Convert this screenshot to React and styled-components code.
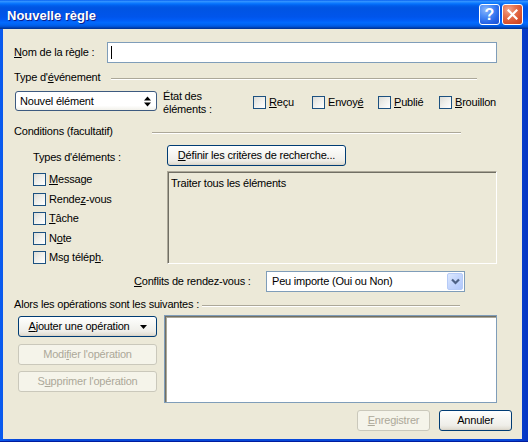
import React from 'react';
import styled, { createGlobalStyle } from 'styled-components';

const GlobalStyle = createGlobalStyle`
  html, body {
    margin: 0;
    padding: 0;
    background: #ffffff;
  }
  body {
    font-family: "Liberation Sans", Arial, sans-serif;
  }
`

const Window = styled.div`
  width: 528px;
  height: 442px;
  display: flex;
  flex-direction: column;
  overflow: hidden;
`

const TitleBar = styled.div`
  height: 29px;
  flex: none;
  display: flex;
  align-items: center;
  gap: 2px;
  padding: 0 5px 0 7px;
  background: linear-gradient(180deg, #0058EE 0%, #3593FF 4%, #288EFF 7%, #127DFF 10%, #036FFC 14%, #0262EE 18%, #0057E5 24%, #0054E3 30%, #0055EB 58%, #005BF5 68%, #026AFE 78%, #0062EF 86%, #0052D6 92%, #0040AB 96%, #003092 100%);
`

const Title = styled.div`
  flex: 1;
  color: #ffffff;
  font-weight: bold;
  font-size: 13px;
  padding-top: 1px;
  text-shadow: 1px 1px 0 #0A1E8C;
`

const CaptionButton = styled.div`
  width: 21px;
  height: 21px;
  box-sizing: border-box;
  border: 1px solid #ffffff;
  border-radius: 3px;
  display: flex;
  align-items: center;
  justify-content: center;
  color: #ffffff;
  font-weight: bold;
  font-size: 16px;
  background: ${p => p.$close
    ? 'radial-gradient(circle at 30% 25%, #F3A58D 0%, #E5734F 35%, #D9512D 70%, #C4401F 100%)'
    : 'radial-gradient(circle at 30% 25%, #8CB6FA 0%, #4C8DF7 35%, #2563E6 70%, #1B4FD0 100%)'};
`

const Frame = styled.div`
  flex: 1;
  display: flex;
  padding: 0 6px 3px 3px;
  background: linear-gradient(90deg, #0A5CF0 0%, #0748D9 3%, #0748D9 97%, #0636C2 100%);
  box-shadow: inset 0 -1px 0 #001C9E;
`

const Client = styled.div`
  flex: 1;
  display: flex;
  flex-direction: column;
  background: #ECE9D8;
  padding: 13px 10px 0 11px;
  font-size: 11px;
  line-height: 13px;
  letter-spacing: -0.2px;
  color: #000000;
  white-space: nowrap;
`

const Key = styled.span`
  text-decoration: underline;
  text-underline-offset: 1px;
`

const NameRow = styled.div`
  display: flex;
  align-items: center;
  height: 21px;
`

const FieldLabel = styled.div`
  width: ${p => p.$w}px;
  flex: none;
  text-align: ${p => p.$align || 'left'};
`

const TextInput = styled.div`
  width: 390px;
  height: 21px;
  box-sizing: border-box;
  border: 1px solid #7F9DB9;
  background: #ffffff;
  display: flex;
  align-items: center;
  padding-left: 3px;
`

const Caret = styled.span`
  width: 1px;
  height: 13px;
  background: #000000;
`

const GroupHeader = styled.div`
  display: flex;
  align-items: center;
  height: 13px;
  width: ${p => p.$w}px;
  margin-top: ${p => p.$mt}px;
`

const Rule = styled.div`
  margin-left: auto;
  flex: 0 1 ${p => p.$w}px;
  height: 0;
  border-top: 1px solid #ACA899;
  border-bottom: 1px solid #ffffff;
  margin-top: 3px;
`

const EventRow = styled.div`
  display: flex;
  align-items: flex-start;
  height: 28px;
  margin-top: 5px;
  padding-left: 1px;
`

const SpinSelect = styled.div`
  width: 142px;
  height: 20px;
  margin-top: 2px;
  box-sizing: border-box;
  border: 1px solid #3D5A80;
  border-radius: 3px;
  background: linear-gradient(180deg, #ffffff 0%, #ffffff 75%, #F2F1EB 100%);
  display: flex;
  align-items: center;
  justify-content: space-between;
  padding: 0 5px 0 4px;
`

const StateLabel = styled.div`
  width: 90px;
  margin-left: 6px;
  margin-top: 1px;
  flex: none;
`

const Check = styled.div`
  display: flex;
  align-items: center;
  gap: 3px;
  flex: none;
  width: ${p => (p.$w ? `${p.$w}px` : 'auto')};
  height: ${p => p.$h || 13}px;
  margin-top: ${p => p.$mt || 0}px;
`

const Box = styled.span`
  width: 13px;
  height: 13px;
  box-sizing: border-box;
  flex: none;
  border: 1px solid #1C5180;
  background: linear-gradient(135deg, #DCDCD7 0%, #EEEEEA 45%, #FFFFFF 100%);
`

const CondArea = styled.div`
  display: grid;
  grid-template-columns: 19px 134px 330px;
  height: 119px;
  margin-top: 7px;
`

const TypesColumn = styled.div`
  grid-column: 2;
  padding-top: 6px;
  display: flex;
  flex-direction: column;
`

const CheckList = styled.div`
  margin-top: 6px;
  display: flex;
  flex-direction: column;
`

const CriteriaColumn = styled.div`
  grid-column: 3;
  display: flex;
  flex-direction: column;
  gap: 5px;
`

const Button = styled.div`
  width: ${p => p.$w}px;
  height: 21px;
  box-sizing: border-box;
  flex: none;
  display: flex;
  align-items: center;
  justify-content: center;
  gap: 10px;
  border: 1px solid ${p => (p.$disabled ? '#CAC8BB' : '#003C74')};
  border-radius: 3px;
  color: ${p => (p.$disabled ? '#ACA899' : '#000000')};
  background: ${p => (p.$disabled
    ? '#F5F4EA'
    : 'linear-gradient(180deg, #FFFFFF 0%, #F8F8F5 30%, #EFEEE9 75%, #E3E0D6 92%, #D6D0C5 100%)')};
`

const CriteriaBox = styled.div`
  height: 93px;
  box-sizing: border-box;
  border-style: solid;
  border-width: 1px;
  border-color: #ACA899 #FFFFFF #FFFFFF #ACA899;
  box-shadow: inset 1px 1px 0 #716F64;
  padding: 5px 0 0 3px;
`

const ConflictRow = styled.div`
  display: flex;
  align-items: center;
  height: 21px;
  margin-top: 7px;
  padding-left: 120px;
`

const Combo = styled.div`
  width: 199px;
  height: 21px;
  box-sizing: border-box;
  border: 1px solid #7F9DB9;
  background: #ffffff;
  display: flex;
  align-items: center;
  justify-content: space-between;
  padding: 0 1px 0 5px;
`

const ComboButton = styled.div`
  width: 16px;
  height: 17px;
  box-sizing: border-box;
  border: 1px solid #B6CBF7;
  border-radius: 2px;
  background: linear-gradient(135deg, #DCE8FE 0%, #C3D5FD 50%, #B1C8FB 100%);
  display: flex;
  align-items: center;
  justify-content: center;
`

const OpsArea = styled.div`
  display: grid;
  grid-template-columns: 150px 333px;
  margin-top: 4px;
  height: 88px;
`

const OpsButtons = styled.div`
  display: flex;
  flex-direction: column;
  gap: 6.5px;
  padding: 1px 0 0 4px;
`

const ListBox = styled.div`
  height: 88px;
  box-sizing: border-box;
  border: 1px solid #7F9DB9;
  background: #ffffff;
  box-shadow: inset 1px 1px 0 #716F64, inset 2px 2px 0 #ACA899;
`

const Footer = styled.div`
  display: flex;
  justify-content: flex-end;
  gap: 9px;
  margin-top: 7px;
`

const SpinArrows = () => (
  <svg width="7" height="11" viewBox="0 0 7 11">
    <path d="M3.5 0.5 L7 4.5 L0 4.5 Z" fill="#000" />
    <path d="M0 6.5 L7 6.5 L3.5 10.5 Z" fill="#000" />
  </svg>
)

const DropTriangle = () => (
  <svg width="7" height="4" viewBox="0 0 7 4">
    <path d="M0 0 L7 0 L3.5 4 Z" fill="#000" />
  </svg>
)

const Chevron = () => (
  <svg width="9" height="7" viewBox="0 0 9 7">
    <path d="M1 1.5 L4.5 5 L8 1.5" fill="none" stroke="#4D6185" strokeWidth="2.2" />
  </svg>
)

const CloseGlyph = () => (
  <svg width="11" height="11" viewBox="0 0 11 11">
    <path d="M1.5 1.5 L9.5 9.5 M9.5 1.5 L1.5 9.5" stroke="#fff" strokeWidth="2.2" strokeLinecap="square" />
  </svg>
)

const itemTypes = [
  { key: 'M', rest: 'essage' },
  { pre: 'Rende', key: 'z', rest: '-vous' },
  { key: 'T', rest: 'âche' },
  { pre: 'N', key: 'o', rest: 'te' },
  { pre: 'Msg télép', key: 'h', rest: '.' },
]

const states = [
  { key: 'R', rest: 'eçu', w: 59 },
  { pre: 'Envoy', key: 'é', w: 66 },
  { key: 'P', rest: 'ublié', w: 61 },
  { key: 'B', rest: 'rouillon' },
]

const App = () => {
  return (
    <>
      <GlobalStyle />
      <Window>
        <TitleBar>
          <Title>Nouvelle règle</Title>
          <CaptionButton>?</CaptionButton>
          <CaptionButton $close><CloseGlyph /></CaptionButton>
        </TitleBar>
        <Frame>
          <Client>
            <NameRow>
              <FieldLabel $w={93}><Key>N</Key>om de la règle :</FieldLabel>
              <TextInput><Caret /></TextInput>
            </NameRow>

            <GroupHeader $w={463} $mt={8}>
              Type d'<Key>é</Key>vénement
              <Rule $w={366} />
            </GroupHeader>

            <EventRow>
              <SpinSelect>
                <span>Nouvel élément</span>
                <SpinArrows />
              </SpinSelect>
              <StateLabel>État des<br />éléments :</StateLabel>
              {states.map(s => (
                <Check key={s.key} $w={s.w} $mt={7}>
                  <Box />
                  <span>{s.pre}<Key>{s.key}</Key>{s.rest}</span>
                </Check>
              ))}
            </EventRow>

            <GroupHeader $w={447} $mt={8}>
              Conditions (facultatif)
              <Rule $w={309} />
            </GroupHeader>

            <CondArea>
              <TypesColumn>
                <div>Types d'éléments :</div>
                <CheckList>
                  {itemTypes.map(t => (
                    <Check key={t.key + t.rest} $h={19.5}>
                      <Box />
                      <span>{t.pre}<Key>{t.key}</Key>{t.rest}</span>
                    </Check>
                  ))}
                </CheckList>
              </TypesColumn>
              <CriteriaColumn>
                <Button $w={179}><span><Key>D</Key>éfinir les critères de recherche...</span></Button>
                <CriteriaBox>Traiter tous les éléments</CriteriaBox>
              </CriteriaColumn>
            </CondArea>

            <ConflictRow>
              <FieldLabel $w={132}><Key>C</Key>onflits de rendez-vous :</FieldLabel>
              <Combo>
                <span>Peu importe (Oui ou Non)</span>
                <ComboButton><Chevron /></ComboButton>
              </Combo>
            </ConflictRow>

            <GroupHeader $w={446} $mt={6}>
              Alors les opérations sont les suivantes :
              <Rule $w={258} />
            </GroupHeader>

            <OpsArea>
              <OpsButtons>
                <Button $w={139}>
                  <span><Key>A</Key>jouter une opération</span>
                  <DropTriangle />
                </Button>
                <Button $w={139} $disabled><span>Modi<Key>f</Key>ier l'opération</span></Button>
                <Button $w={139} $disabled><span>S<Key>u</Key>pprimer l'opération</span></Button>
              </OpsButtons>
              <ListBox />
            </OpsArea>

            <Footer>
              <Button $w={73} $disabled><span><Key>E</Key>nregistrer</span></Button>
              <Button $w={73}>Annuler</Button>
            </Footer>
          </Client>
        </Frame>
      </Window>
    </>
  );
};

export default App;
